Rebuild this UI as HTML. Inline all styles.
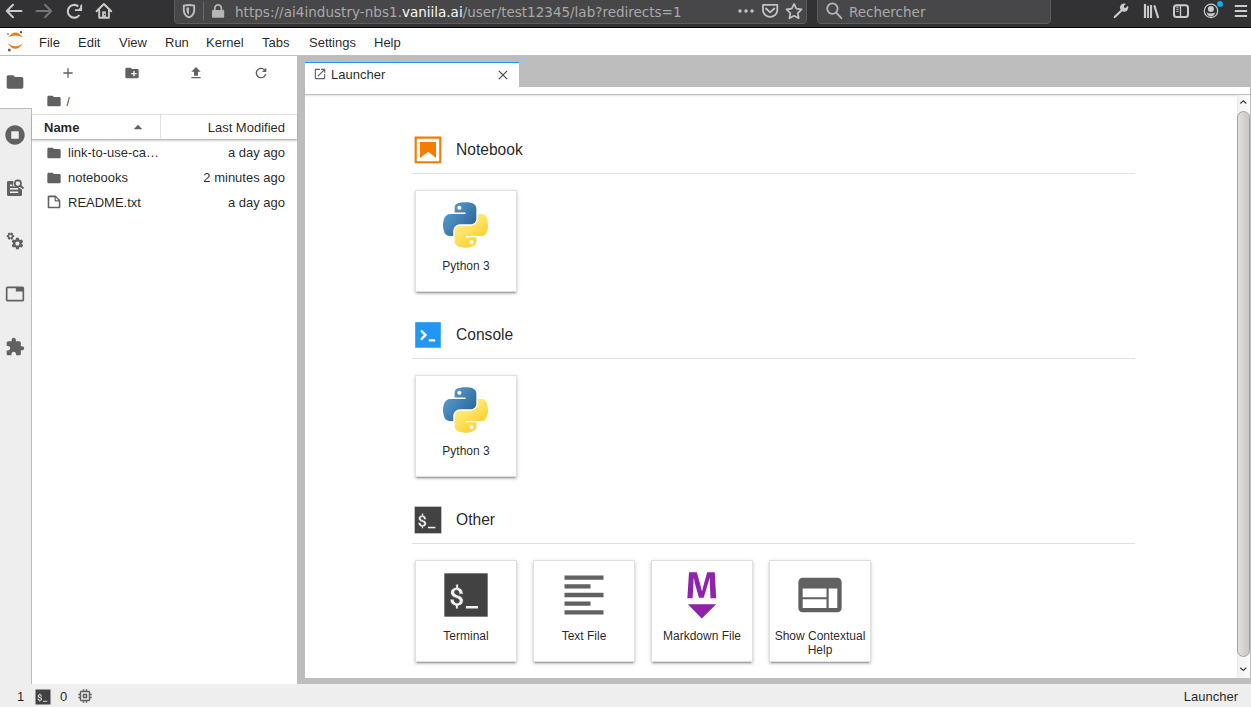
<!DOCTYPE html>
<html lang="en">
<head>
<meta charset="utf-8">
<title>JupyterLab</title>
<style>
*{box-sizing:border-box;margin:0;padding:0}
html,body{width:1251px;height:707px;overflow:hidden;background:#fff}
body{position:relative;font-family:"Liberation Sans",sans-serif;font-size:13px;color:rgba(0,0,0,.87)}
.abs{position:absolute}
svg{display:block;position:absolute;overflow:visible}
/* ---------- Firefox chrome ---------- */
#ff{left:0;top:0;width:1251px;height:28px;background:#323234;border-bottom:1px solid #000}
#url{left:174px;top:-4px;width:633px;height:28px;background:#474749;border:1px solid #5c5c5e;border-radius:4px}
#search{left:817px;top:-4px;width:234px;height:28px;background:#474749;border:1px solid #5c5c5e;border-radius:4px}
.fftext{font-family:"DejaVu Sans","Liberation Sans",sans-serif;font-size:13.5px;white-space:nowrap;line-height:16px}
/* ---------- Jupyter ---------- */
#menubar{left:0;top:28px;width:1251px;height:28px;background:#fff;border-bottom:1px solid #bdbdbd}
.mi{position:absolute;top:35px;line-height:15px;font-size:13px;white-space:nowrap}
#side{left:0;top:56px;width:32px;height:628px;background:#eee;border-right:1px solid #bdbdbd}
#sideact{left:0;top:56px;width:32px;height:53px;background:#fff;border-bottom:1px solid #bdbdbd}
#fb{left:32px;top:56px;width:265px;height:628px;background:#fff}
#split{left:297px;top:56px;width:8px;height:628px;background:#bdbdbd}
#dock{left:305px;top:56px;width:946px;height:628px;background:#bdbdbd}
#tab{left:305px;top:62px;width:214px;height:26px;background:#fff;border-top:1px solid #2196f3}
#tabline{left:305px;top:87px;width:945px;height:8px;background:#fff;border-bottom:1px solid #bdbdbd;box-shadow:0 1px 2px rgba(0,0,0,.12)}
#content{left:305px;top:95px;width:945px;height:583px;background:#fff}
#status{left:0;top:684px;width:1251px;height:23px;background:#eee}
.hdr{position:absolute;font-size:15.6px;line-height:18px;white-space:nowrap}
.sline{position:absolute;left:412px;width:723px;height:1px;background:#e0e0e0}
.card{position:absolute;width:102px;height:102px;background:#fff;border:1px solid #e0e0e0;box-shadow:0 2px 2px 0 rgba(0,0,0,.14),0 1px 5px 0 rgba(0,0,0,.12),0 3px 1px -2px rgba(0,0,0,.2)}
.clabel{position:absolute;left:0;width:100px;text-align:center;font-size:12px;line-height:14px;top:68px}
.row{position:absolute;left:32px;width:265px;height:25px;font-size:13px;line-height:15px}
.row .n{position:absolute;left:36px;top:5px;white-space:nowrap}
.row .m{position:absolute;right:12px;top:5px;white-space:nowrap}
</style>
</head>
<body>
<!-- Firefox toolbar -->
<div id="ff" class="abs"></div>
<div id="url" class="abs"></div>
<div id="search" class="abs"></div>
<div class="abs fftext" style="left:235px;top:4px;color:#a9a9ab"><span style="letter-spacing:.04px">https://ai4industry-nbs1.</span><span style="color:#f9f9fa">vaniila.ai</span>/user/test12345/lab?redirects=1</div>
<div class="abs fftext" style="left:849px;top:4px;color:#a9a9ab">Rechercher</div>

<svg id="fficons" width="1251" height="28" viewBox="0 0 1251 28" style="left:0;top:0" fill="none" stroke="#cbcbcc" stroke-width="2" stroke-linecap="round" stroke-linejoin="round">
<!-- back -->
<path d="M21.5 11H7M13 4.8L6.8 11L13 17.2"/>
<!-- forward -->
<path d="M36.5 11H51M45 4.8L51.2 11L45 17.2" stroke="#757577"/>
<!-- reload -->
<path d="M79.4 15A6.4 6.4 0 1 1 78.3 6.4" stroke-width="2.1" stroke-linecap="butt"/>
<path d="M82.1 3.9V11H74.9V9.2H78.4L80.2 7.4V5.4Z" fill="#cbcbcc" stroke="none"/>
<!-- home -->
<path d="M96.6 11.2L103.9 4L111.2 11.2"/><path d="M99.2 10V17.8H108.9V10" stroke-width="1.9"/>
<rect x="102.1" y="11.3" width="3.8" height="6" fill="#c4c4c5" stroke="none"/><circle cx="104.5" cy="14.4" r=".55" fill="#323234" stroke="none"/>
<!-- shield -->
<path d="M183.8 5.7Q189 4.2 194.2 5.7V10C194.2 13.8 192 16.2 189 17.4C186 16.2 183.8 13.8 183.8 10Z" stroke="#bdbdbe" stroke-width="1.9"/>
<path d="M189 7.2Q187.6 7.3 186.5 7.7V10.2C186.6 12.4 187.6 13.9 189 14.7Z" fill="#bdbdbe" stroke="none"/>
<path d="M203.500 2V20" stroke="#5f6a78" stroke-width="1"/>
<!-- lock -->
<path d="M214.800 10V8.200A3.300 3.300 0 0 1 221.400 8.200V10" stroke="#b5b5b6" stroke-width="1.800"/>
<rect x="212" y="10" width="12.200" height="7.700" rx="1" fill="#b5b5b6" stroke="none"/>
<!-- dots -->
<g fill="#c3c3c4" stroke="none"><circle cx="740" cy="11" r="1.75"/><circle cx="746" cy="11" r="1.75"/><circle cx="752" cy="11" r="1.75"/></g>
<!-- pocket -->
<path d="M763 4.9H777.3V10.2A7.15 6.7 0 0 1 763 10.2Z" stroke="#c3c3c4" stroke-width="1.8"/>
<path d="M766 8.5L770.15 12.4L774.3 8.5" stroke="#c3c3c4" stroke-width="1.8"/>
<!-- star -->
<path d="M794.05 3.95L796.34 8.69L801.56 9.41L797.76 13.06L798.69 18.24L794.05 15.75L789.41 18.24L790.34 13.06L786.54 9.41L791.76 8.69Z" stroke="#c3c3c4" stroke-width="1.7"/>
<!-- search -->
<circle cx="832.4" cy="8.6" r="5.2" stroke="#b5b5b6" stroke-width="1.8"/>
<path d="M836.2 12.6L841.4 18.2" stroke="#b5b5b6" stroke-width="1.9"/>
<!-- wrench -->
<path d="M1114.700 17L1122 10" stroke-width="2.200"/>
<circle cx="1124.100" cy="7.600" r="4.200" fill="#cbcbcc" stroke="none"/>
<path d="M1125.200 6.500L1129.500 2.200" stroke="#323234" stroke-width="2.700" stroke-linecap="round"/>
<!-- library -->
<path d="M1145 4V18" stroke-linecap="butt" stroke-width="2.200"/><path d="M1148.050 5.800V18" stroke-linecap="butt" stroke-width="1.900"/><path d="M1151.050 5V18" stroke-linecap="butt" stroke-width="2.100"/>
<path d="M1154.300 5.400L1158.200 18" stroke-linecap="butt" stroke-width="2.100"/>
<!-- sidebar -->
<rect x="1174" y="5.200" width="14" height="11.800" rx="2.500" stroke-width="2"/>
<path d="M1180.500 5V17.200" stroke-width="1.300" stroke-linecap="butt"/>
<path d="M1176.300 7.200H1178.600M1176.300 9.300H1178.600M1176.300 11.400H1178.600" stroke-width="1" stroke-linecap="butt"/>
<!-- account -->
<circle cx="1211" cy="10.85" r="6.7" stroke-width="1.2"/>
<circle cx="1210.9" cy="8.9" r="3" fill="#cdcdce" stroke="none"/>
<path d="M1206.7 12.5Q1210.9 14.5 1215.1 12.5Q1214 16.4 1210.9 16.4Q1207.8 16.4 1206.7 12.5Z" fill="#cdcdce" stroke="none"/>
<circle cx="1220" cy="3.9" r="2.9" fill="#00b3f4" stroke="none"/>
<!-- hamburger -->
<path d="M1234.8 6H1247.1M1234.8 11H1247.1M1234.8 16H1247.1" stroke-linecap="butt" stroke-width="2.1"/>
</svg>

<!-- Jupyter menubar -->
<div id="menubar" class="abs"></div>
<span class="mi" style="left:39px">File</span>
<span class="mi" style="left:78px">Edit</span>
<span class="mi" style="left:119px">View</span>
<span class="mi" style="left:165px">Run</span>
<span class="mi" style="left:206px">Kernel</span>
<span class="mi" style="left:262px">Tabs</span>
<span class="mi" style="left:309px">Settings</span>
<span class="mi" style="left:374px">Help</span>

<!-- sidebar / file browser -->
<div id="side" class="abs"></div>
<div id="sideact" class="abs"></div>
<div id="fb" class="abs"></div>
<div id="split" class="abs"></div>
<div id="dock" class="abs"></div>
<div id="tab" class="abs"></div>
<div id="content" class="abs"></div>
<div id="tabline" class="abs"></div>
<div id="status" class="abs"></div>

<div class="abs" style="left:66.4px;top:95px;font-size:12px;line-height:14px;color:rgba(0,0,0,.8)">/</div>
<div class="abs" style="left:32px;top:114px;width:265px;height:26px;border-top:1px solid #e0e0e0;border-bottom:1px solid #bdbdbd;box-shadow:0 1px 2px rgba(0,0,0,.2)"></div>
<div class="abs" style="left:160px;top:115px;width:1px;height:24px;background:#e0e0e0"></div>
<div class="abs" style="left:44px;top:120px;font-size:13px;line-height:15px;font-weight:bold">Name</div>
<div class="abs" style="left:160px;top:120px;width:125px;text-align:right;font-size:13px;line-height:15px">Last Modified</div>
<div class="row" style="top:140px"><span class="n">link-to-use-ca…</span><span class="m">a day ago</span></div>
<div class="row" style="top:165px"><span class="n">notebooks</span><span class="m">2 minutes ago</span></div>
<div class="row" style="top:190px"><span class="n">README.txt</span><span class="m">a day ago</span></div>


<!-- ===== Jupyter icons ===== -->
<svg width="32" height="28" viewBox="0 28 32 28" style="left:0;top:28px">
<path d="M7.900 37.600Q15.400 27.200 22.900 37.600Q15.400 33.400 7.900 37.600Z" fill="#f47a08"/>
<path d="M7.700 43.300Q15.400 54.400 23 43.300Q15.400 49.400 7.700 43.300Z" fill="#f47a08"/>
<circle cx="21" cy="32.200" r="1.150" fill="#4e4e4e"/><circle cx="8" cy="33.900" r=".850" fill="#767677"/><circle cx="9.300" cy="50" r="1.500" fill="#616161"/>
</svg>
<!-- sidebar: folder -->
<svg width="20" height="20" viewBox="0 0 24 24" style="left:5px;top:72px"><path fill="#616161" d="M10 4H4c-1.100 0-1.990.900-1.990 2L2 18c0 1.100.900 2 2 2h16c1.100 0 2-.900 2-2V8c0-1.100-.900-2-2-2h-8l-2-2z"/></svg>
<!-- sidebar: running -->
<svg width="20" height="20" viewBox="0 0 512 512" style="left:5px;top:125px"><path fill="#616161" d="M256 8C119 8 8 119 8 256s111 248 248 248 248-111 248-248S393 8 256 8zm96 328c0 8.800-7.200 16-16 16H176c-8.800 0-16-7.200-16-16V176c0-8.800 7.200-16 16-16h160c8.800 0 16 7.200 16 16v160z"/></svg>
<!-- sidebar: palette -->
<svg width="32" height="24" viewBox="0 176 32 24" style="left:0;top:176px">
<rect x="7" y="181" width="15" height="15" rx="1.200" fill="#616161"/>
<rect x="10" y="184.600" width="2.400" height="1.500" fill="#f4f4f4"/>
<rect x="10" y="188.100" width="8.200" height="1.500" fill="#f4f4f4"/>
<rect x="10" y="191.500" width="8.200" height="1.500" fill="#f4f4f4"/>
<path d="M13.300 180H23V187.700H18.600V186.500H13.300Z" fill="#eee"/>
<path d="M19.500 185.300L23.800 189" stroke="#eee" stroke-width="3.600"/>
<circle cx="17.900" cy="183.500" r="3.100" fill="#eee" stroke="#5a5a5a" stroke-width="1.600"/>
<path d="M20.300 185.700L23 188" stroke="#5a5a5a" stroke-width="1.800" stroke-linecap="round"/>
</svg>
<!-- sidebar: build (gears) -->
<svg width="20" height="20" viewBox="0 0 24 24" style="left:5px;top:231px"><g fill="#616161"><path d="M14.900 17.450C16.250 17.450 17.350 16.350 17.350 15C17.350 13.650 16.250 12.550 14.900 12.550C13.540 12.550 12.450 13.650 12.450 15C12.450 16.350 13.540 17.450 14.900 17.450ZM20.100 15.680L21.580 16.840C21.710 16.950 21.750 17.130 21.660 17.290L20.260 19.710C20.170 19.860 20 19.920 19.830 19.860L18.090 19.160C17.730 19.440 17.330 19.670 16.910 19.850L16.640 21.700C16.620 21.870 16.470 22 16.300 22H13.500C13.320 22 13.180 21.870 13.150 21.700L12.890 19.850C12.460 19.670 12.070 19.440 11.710 19.160L9.960 19.860C9.810 19.920 9.620 19.860 9.540 19.710L8.140 17.290C8.050 17.130 8.090 16.950 8.220 16.840L9.700 15.680L9.650 15L9.700 14.310L8.220 13.160C8.090 13.050 8.050 12.860 8.140 12.710L9.540 10.290C9.620 10.130 9.810 10.070 9.960 10.130L11.710 10.840C12.070 10.560 12.460 10.320 12.890 10.150L13.150 8.290C13.180 8.130 13.320 8 13.500 8H16.300C16.470 8 16.620 8.130 16.640 8.290L16.910 10.150C17.330 10.320 17.730 10.560 18.090 10.840L19.830 10.130C20 10.070 20.170 10.130 20.260 10.290L21.660 12.710C21.750 12.860 21.710 13.050 21.580 13.160L20.100 14.310L20.150 15L20.100 15.680Z"/><path d="M7.330 7.444C8.083 7.010 8.339 6.053 7.904 5.300C7.469 4.546 6.508 4.282 5.755 4.717C5.392 4.926 5.127 5.271 5.018 5.676C4.910 6.081 4.967 6.512 5.176 6.875C5.611 7.628 6.576 7.880 7.330 7.444ZM9.657 4.796L10.867 4.952C10.963 4.977 11.040 5.071 11.038 5.188L11.039 6.989C11.046 7.101 10.962 7.195 10.855 7.211L9.660 7.381L9.239 8.132L9.670 9.257C9.707 9.363 9.669 9.477 9.574 9.532L8.015 10.432C7.911 10.492 7.793 10.468 7.721 10.382L6.987 9.432L6.109 9.431L5.347 10.390C5.282 10.470 5.165 10.490 5.078 10.444L3.512 9.539C3.411 9.486 3.382 9.364 3.417 9.263L3.858 8.151L3.422 7.392L2.217 7.227C2.115 7.207 2.043 7.118 2.045 7.001L2.044 5.200C2.037 5.088 2.121 4.994 2.228 4.978L3.423 4.808L3.864 4.057L3.423 2.940C3.386 2.835 3.424 2.721 3.519 2.666L5.078 1.766C5.182 1.706 5.300 1.730 5.372 1.815L6.111 2.757L6.979 2.758L7.741 1.798C7.806 1.719 7.923 1.698 8.010 1.745L9.576 2.650C9.677 2.703 9.706 2.825 9.671 2.926L9.225 4.047L9.657 4.796Z"/></g></svg>
<!-- sidebar: tabs -->
<svg width="20" height="20" viewBox="0 0 24 24" style="left:5px;top:284px"><path fill="#616161" d="M21 3H3c-1.100 0-2 .900-2 2v14c0 1.100.900 2 2 2h18c1.100 0 2-.900 2-2V5c0-1.100-.900-2-2-2zm0 16H3V5h10v4h8v10z"/></svg>
<!-- sidebar: extension -->
<svg width="20" height="20" viewBox="0 0 24 24" style="left:5px;top:337px"><path fill="#616161" d="M20.500 11H19V7c0-1.100-.900-2-2-2h-4V3.500C13 2.120 11.880 1 10.500 1S8 2.120 8 3.500V5H4c-1.100 0-1.990.900-1.990 2v3.800H3.500c1.490 0 2.700 1.210 2.700 2.700s-1.210 2.700-2.700 2.700H2V20c0 1.100.900 2 2 2h3.800v-1.500c0-1.490 1.210-2.700 2.700-2.700 1.490 0 2.700 1.210 2.700 2.700V22H17c1.100 0 2-.900 2-2v-4h1.500c1.380 0 2.500-1.120 2.500-2.500S21.880 11 20.500 11z"/></svg>
<!-- fb toolbar -->
<svg width="16" height="16" viewBox="0 0 24 24" style="left:60px;top:65px"><path fill="#616161" d="M19 13h-6v6h-2v-6H5v-2h6V5h2v6h6v2z"/></svg>
<svg width="16" height="16" viewBox="0 0 24 24" style="left:124px;top:65px"><path fill="#616161" d="M20 6h-8l-2-2H4c-1.110 0-1.990.890-1.990 2L2 18c0 1.110.890 2 2 2h16c1.110 0 2-.890 2-2V8c0-1.110-.890-2-2-2zm-1 8h-3v3h-2v-3h-3v-2h3V9h2v3h3v2z"/></svg>
<svg width="16" height="16" viewBox="0 0 24 24" style="left:188px;top:65px"><path fill="#616161" d="M9 16h6v-6h4l-7-7-7 7h4zm-4 2h14v2H5z"/></svg>
<svg width="16" height="16" viewBox="0 0 18 18" style="left:252.500px;top:65px"><path fill="#616161" d="M9 13.500c-2.490 0-4.500-2.010-4.500-4.500S6.510 4.500 9 4.500c1.240 0 2.360.520 3.170 1.330L10 8h5V3l-1.760 1.760C12.150 3.680 10.660 3 9 3 5.690 3 3.010 5.690 3.010 9S5.690 15 9 15c2.970 0 5.430-2.160 5.900-5h-1.520c-.460 2-2.240 3.500-4.380 3.500z"/></svg>
<!-- breadcrumb folder -->
<svg width="16" height="16" viewBox="0 0 24 24" style="left:46px;top:93px"><path fill="#616161" d="M10 4H4c-1.100 0-1.990.900-1.990 2L2 18c0 1.100.900 2 2 2h16c1.100 0 2-.900 2-2V8c0-1.100-.900-2-2-2h-8l-2-2z"/></svg>
<!-- sort caret -->
<svg width="10" height="6" viewBox="0 0 10 6" style="left:133px;top:124px"><path fill="#616161" d="M.700 5.300L5 .800L9.300 5.300Z"/></svg>
<!-- file list icons -->
<svg width="16" height="16" viewBox="0 0 24 24" style="left:46px;top:145px"><path fill="#616161" d="M10 4H4c-1.100 0-1.990.900-1.990 2L2 18c0 1.100.900 2 2 2h16c1.100 0 2-.900 2-2V8c0-1.100-.900-2-2-2h-8l-2-2z"/></svg>
<svg width="16" height="16" viewBox="0 0 24 24" style="left:46px;top:170px"><path fill="#616161" d="M10 4H4c-1.100 0-1.990.900-1.990 2L2 18c0 1.100.900 2 2 2h16c1.100 0 2-.900 2-2V8c0-1.100-.900-2-2-2h-8l-2-2z"/></svg>
<svg width="16" height="16" viewBox="0 0 22 22" style="left:46px;top:194px"><path fill="#616161" d="M19.300 8.200l-5.500-5.500c-.300-.300-.700-.500-1.200-.500H3.900c-.800.100-1.600.900-1.600 1.800v14.100c0 .900.700 1.600 1.600 1.600h14.200c.900 0 1.600-.700 1.600-1.600V9.400c.100-.500-.100-.900-.400-1.200zm-5.800-3.300l3.400 3.600h-3.400V4.900zm3.900 12.700H4.700c-.100 0-.200 0-.200-.200V4.700c0-.200.100-.300.200-.300h7.200v4.400s0 .800.300 1.100c.300.300 1.100.300 1.100.300h4.300v7.200s-.100.200-.200.200z"/></svg>
<!-- tab icons -->
<svg width="14" height="14" viewBox="0 0 24 24" style="left:313px;top:67px"><path fill="#616161" d="M19 19H5V5h7V3H5c-1.110 0-2 .900-2 2v14c0 1.100.890 2 2 2h14c1.100 0 2-.900 2-2v-7h-2v7zM14 3v2h3.590l-9.830 9.830 1.410 1.410L19 6.410V10h2V3h-7z"/></svg>
<svg width="12" height="12" viewBox="0 0 12 12" style="left:497px;top:69px"><path d="M1.800 1.800L10.200 10.200M10.200 1.800L1.800 10.200" stroke="#424242" stroke-width="1.150" fill="none"/></svg>

<!-- tab -->
<div class="abs" style="left:331px;top:67px;font-size:13px;line-height:15px">Launcher</div>

<!-- launcher -->
<div class="hdr" style="left:456px;top:141px">Notebook</div>
<div class="sline" style="top:173px"></div>
<div class="card" style="left:415px;top:190px"><div class="clabel">Python 3</div></div>

<div class="hdr" style="left:456px;top:326px">Console</div>
<div class="sline" style="top:358px"></div>
<div class="card" style="left:415px;top:375px"><div class="clabel">Python 3</div></div>

<div class="hdr" style="left:456px;top:511px">Other</div>
<div class="sline" style="top:543px"></div>
<div class="card" style="left:415px;top:560px"><div class="clabel">Terminal</div></div>
<div class="card" style="left:533px;top:560px"><div class="clabel">Text File</div></div>
<div class="card" style="left:651px;top:560px"><div class="clabel">Markdown File</div></div>
<div class="card" style="left:769px;top:560px"><div class="clabel">Show Contextual Help</div></div>


<svg width="0" height="0" style="left:0;top:0"><defs>
<linearGradient id="pyb" gradientUnits="userSpaceOnUse" x1="10" y1="8" x2="70" y2="60"><stop offset="0" stop-color="#5a9fd4"/><stop offset="1" stop-color="#306998"/></linearGradient>
<linearGradient id="pyy" gradientUnits="userSpaceOnUse" x1="75" y1="95" x2="50" y2="62"><stop offset="0" stop-color="#ffd43b"/><stop offset="1" stop-color="#ffe873"/></linearGradient>
</defs></svg>
<!-- section icons -->
<svg width="32" height="32" viewBox="0 0 22 22" style="left:412px;top:134px"><g fill="#f57c00"><path d="M18.700 3.300v15.400H3.300V3.300h15.400m1.500-1.500H1.800v18.300h18.300l.1-18.300z"/><path d="M16.500 16.500l-5.400-4.300-5.600 4.300v-11h11z"/></g></svg>
<svg width="32" height="32" viewBox="0 0 200 200" style="left:412px;top:319px"><path fill="#2196f3" d="M20 19.800h160v159.900H20z"/><path fill="#fff" d="M105 127.300h40v12.800h-40zM51.100 77L74 99.900l-23.300 23.300 10.500 10.500 23.300-23.300L95 99.900 84.500 89.400 61.600 66.500z"/></svg>
<svg width="32" height="32" viewBox="0 0 24 24" style="left:412px;top:504px"><rect x="2" y="2" width="20" height="20" fill="#424242"/><g transform="translate(-0.161,-0.407) scale(1.361,1.269)"><path fill="#f2f2f2" stroke="#424242" stroke-width=".3" d="M5.057 8.762C5.057 8.553 5.107 8.383 5.209 8.252C5.314 8.121 5.480 8.056 5.707 8.056C6.016 8.056 6.238 8.177 6.375 8.419C6.516 8.661 6.596 9.027 6.615 9.518H8.004C7.984 8.865 7.844 8.326 7.582 7.900C7.320 7.471 6.928 7.186 6.404 7.045V5.813H5.449V7.006C4.918 7.100 4.492 7.307 4.172 7.627C3.852 7.943 3.691 8.324 3.691 8.770C3.691 9.199 3.773 9.547 3.938 9.813C4.105 10.078 4.330 10.297 4.611 10.469C4.893 10.637 5.225 10.787 5.607 10.920C5.994 11.053 6.264 11.188 6.416 11.324C6.572 11.461 6.650 11.664 6.650 11.934C6.650 12.168 6.590 12.352 6.469 12.484C6.348 12.617 6.172 12.684 5.941 12.684C5.613 12.684 5.354 12.568 5.162 12.338C4.975 12.107 4.881 11.750 4.881 11.266H3.498C3.498 11.949 3.660 12.502 3.984 12.924C4.309 13.342 4.766 13.617 5.355 13.750V14.869H6.305V13.762C6.852 13.676 7.273 13.475 7.570 13.158C7.867 12.838 8.016 12.428 8.016 11.928C8.016 11.498 7.934 11.150 7.770 10.885C7.605 10.615 7.381 10.395 7.096 10.223C6.814 10.047 6.477 9.889 6.082 9.748C5.691 9.607 5.424 9.465 5.279 9.320C5.131 9.172 5.057 8.986 5.057 8.762Z"/></g><rect x="11.950" y="17.080" width="5.600" height="1.150" fill="#f2f2f2"/></svg>
<!-- card icons -->
<svg width="45" height="46" viewBox="0 0 111 112" style="left:443px;top:202px"><path fill="url(#pyb)" d="M54.919 0.001C50.335 0.022 45.958 0.413 42.106 1.095C30.760 3.099 28.700 7.295 28.700 15.032L28.700 25.251L55.513 25.251L55.513 28.657L28.700 28.657L18.638 28.657C10.845 28.657 4.022 33.341 1.888 42.251C-0.574 52.464 -0.684 58.837 1.888 69.501C3.793 77.439 8.345 83.095 16.138 83.095L25.356 83.095L25.356 70.845C25.356 61.995 33.013 54.188 42.106 54.188L68.888 54.188C76.342 54.188 82.294 48.050 82.294 40.563L82.294 15.032C82.294 7.766 76.164 2.307 68.888 1.095C64.282 0.328 59.502 -0.020 54.919 0.001ZM40.419 8.220C43.188 8.220 45.450 10.518 45.450 13.345C45.450 16.161 43.188 18.438 40.419 18.438C37.639 18.438 35.388 16.161 35.388 13.345C35.388 10.518 37.639 8.220 40.419 8.220Z"/><path fill="url(#pyy)" d="M85.638 28.657L85.638 40.563C85.638 49.794 77.812 57.563 68.888 57.563L42.106 57.563C34.770 57.563 28.700 63.842 28.700 71.188L28.700 96.720C28.700 103.986 35.019 108.260 42.106 110.345C50.594 112.840 58.733 113.291 68.888 110.345C75.638 108.390 82.294 104.457 82.294 96.720L82.294 86.501L55.513 86.501L55.513 83.095L82.294 83.095L95.700 83.095C103.492 83.095 106.396 77.659 109.106 69.501C111.906 61.102 111.787 53.025 109.106 42.251C107.180 34.493 103.502 28.657 95.700 28.657L85.638 28.657ZM70.575 93.313C73.355 93.313 75.606 95.591 75.606 98.407C75.606 101.234 73.355 103.532 70.575 103.532C67.806 103.532 65.544 101.234 65.544 98.407C65.544 95.591 67.806 93.313 70.575 93.313Z"/></svg>
<svg width="45" height="46" viewBox="0 0 111 112" style="left:443px;top:387px"><path fill="url(#pyb)" d="M54.919 0.001C50.335 0.022 45.958 0.413 42.106 1.095C30.760 3.099 28.700 7.295 28.700 15.032L28.700 25.251L55.513 25.251L55.513 28.657L28.700 28.657L18.638 28.657C10.845 28.657 4.022 33.341 1.888 42.251C-0.574 52.464 -0.684 58.837 1.888 69.501C3.793 77.439 8.345 83.095 16.138 83.095L25.356 83.095L25.356 70.845C25.356 61.995 33.013 54.188 42.106 54.188L68.888 54.188C76.342 54.188 82.294 48.050 82.294 40.563L82.294 15.032C82.294 7.766 76.164 2.307 68.888 1.095C64.282 0.328 59.502 -0.020 54.919 0.001ZM40.419 8.220C43.188 8.220 45.450 10.518 45.450 13.345C45.450 16.161 43.188 18.438 40.419 18.438C37.639 18.438 35.388 16.161 35.388 13.345C35.388 10.518 37.639 8.220 40.419 8.220Z"/><path fill="url(#pyy)" d="M85.638 28.657L85.638 40.563C85.638 49.794 77.812 57.563 68.888 57.563L42.106 57.563C34.770 57.563 28.700 63.842 28.700 71.188L28.700 96.720C28.700 103.986 35.019 108.260 42.106 110.345C50.594 112.840 58.733 113.291 68.888 110.345C75.638 108.390 82.294 104.457 82.294 96.720L82.294 86.501L55.513 86.501L55.513 83.095L82.294 83.095L95.700 83.095C103.492 83.095 106.396 77.659 109.106 69.501C111.906 61.102 111.787 53.025 109.106 42.251C107.180 34.493 103.502 28.657 95.700 28.657L85.638 28.657ZM70.575 93.313C73.355 93.313 75.606 95.591 75.606 98.407C75.606 101.234 73.355 103.532 70.575 103.532C67.806 103.532 65.544 101.234 65.544 98.407C65.544 95.591 67.806 93.313 70.575 93.313Z"/></svg>
<svg width="52" height="52" viewBox="0 0 24 24" style="left:440px;top:569px"><rect x="2" y="2" width="20" height="20" fill="#424242"/><g transform="translate(-0.161,-0.407) scale(1.361,1.269)"><path fill="#f2f2f2" stroke="#424242" stroke-width=".3" d="M5.057 8.762C5.057 8.553 5.107 8.383 5.209 8.252C5.314 8.121 5.480 8.056 5.707 8.056C6.016 8.056 6.238 8.177 6.375 8.419C6.516 8.661 6.596 9.027 6.615 9.518H8.004C7.984 8.865 7.844 8.326 7.582 7.900C7.320 7.471 6.928 7.186 6.404 7.045V5.813H5.449V7.006C4.918 7.100 4.492 7.307 4.172 7.627C3.852 7.943 3.691 8.324 3.691 8.770C3.691 9.199 3.773 9.547 3.938 9.813C4.105 10.078 4.330 10.297 4.611 10.469C4.893 10.637 5.225 10.787 5.607 10.920C5.994 11.053 6.264 11.188 6.416 11.324C6.572 11.461 6.650 11.664 6.650 11.934C6.650 12.168 6.590 12.352 6.469 12.484C6.348 12.617 6.172 12.684 5.941 12.684C5.613 12.684 5.354 12.568 5.162 12.338C4.975 12.107 4.881 11.750 4.881 11.266H3.498C3.498 11.949 3.660 12.502 3.984 12.924C4.309 13.342 4.766 13.617 5.355 13.750V14.869H6.305V13.762C6.852 13.676 7.273 13.475 7.570 13.158C7.867 12.838 8.016 12.428 8.016 11.928C8.016 11.498 7.934 11.150 7.770 10.885C7.605 10.615 7.381 10.395 7.096 10.223C6.814 10.047 6.477 9.889 6.082 9.748C5.691 9.607 5.424 9.465 5.279 9.320C5.131 9.172 5.057 8.986 5.057 8.762Z"/></g><rect x="11.950" y="17.080" width="5.600" height="1.150" fill="#f2f2f2"/></svg>
<svg width="52" height="52" viewBox="0 0 24 24" style="left:558px;top:569px"><path fill="#616161" d="M15 15H3v2h12v-2zm0-8H3v2h12V7zM3 13h18v-2H3v2zm0 8h18v-2H3v2zM3 3v2h18V3H3z"/></svg>
<svg width="52" height="52" viewBox="0 0 22 22" style="left:676px;top:569px"><path fill="#8e24aa" d="M5 14.900h12l-6.100 6zm9.400-6.800c0-1.300-.100-2.900-.100-4.500-.400 1.400-.900 2.900-1.300 4.300l-1.300 4.300h-2L8.500 7.900c-.400-1.300-.700-2.900-1-4.300-.100 1.600-.100 3.200-.200 4.600L7 12.400H4.800l.7-11h3.300L10 5.600c.300 1.200.700 2.600 1 3.900.300-1.200.700-2.700 1-3.900l1.200-4.200h3.200l.600 11h-2.400l-.2-4.300z"/></svg>
<svg width="52" height="52" viewBox="0 0 24 24" style="left:794px;top:569px"><path fill="#616161" d="M20 4H4c-1.100 0-1.990.900-1.990 2L2 18c0 1.100.900 2 2 2h16c1.100 0 2-.900 2-2V6c0-1.100-.900-2-2-2zm-5 14H4v-4h11v4zm0-5H4V9h11v4zm5 5h-4V9h4v9z"/></svg>
<!-- scrollbar -->
<div class="abs" style="left:1237px;top:95px;width:13px;height:583px;background:linear-gradient(90deg,#e9e9e9 0,#f3f3f3 2px,#fafafa 100%)"></div>
<div class="abs" style="left:1237px;top:111px;width:13px;height:546px;border-radius:6.500px;border:1px solid #a4a09b;background:linear-gradient(90deg,#e6e4e1 0,#dddbd8 14%,#cbc7c3 100%)"></div>
<svg width="13" height="10" viewBox="0 0 13 10" style="left:1237px;top:97px"><path d="M3.300 6.500L6.300 3.700L9.300 6.500" fill="none" stroke="#404040" stroke-width="1.200"/></svg>
<svg width="13" height="10" viewBox="0 0 13 10" style="left:1237px;top:664px"><path d="M3.300 3.700L6.300 6.500L9.300 3.700" fill="none" stroke="#404040" stroke-width="1.200"/></svg>

<!-- status bar -->
<svg width="18" height="18" viewBox="0 0 24 24" style="left:34px;top:688px"><rect x="2" y="2" width="20" height="20" fill="#424242"/><g transform="translate(-0.161,-0.407) scale(1.361,1.269)"><path fill="#f2f2f2" stroke="#424242" stroke-width=".3" d="M5.057 8.762C5.057 8.553 5.107 8.383 5.209 8.252C5.314 8.121 5.480 8.056 5.707 8.056C6.016 8.056 6.238 8.177 6.375 8.419C6.516 8.661 6.596 9.027 6.615 9.518H8.004C7.984 8.865 7.844 8.326 7.582 7.900C7.320 7.471 6.928 7.186 6.404 7.045V5.813H5.449V7.006C4.918 7.100 4.492 7.307 4.172 7.627C3.852 7.943 3.691 8.324 3.691 8.770C3.691 9.199 3.773 9.547 3.938 9.813C4.105 10.078 4.330 10.297 4.611 10.469C4.893 10.637 5.225 10.787 5.607 10.920C5.994 11.053 6.264 11.188 6.416 11.324C6.572 11.461 6.650 11.664 6.650 11.934C6.650 12.168 6.590 12.352 6.469 12.484C6.348 12.617 6.172 12.684 5.941 12.684C5.613 12.684 5.354 12.568 5.162 12.338C4.975 12.107 4.881 11.750 4.881 11.266H3.498C3.498 11.949 3.660 12.502 3.984 12.924C4.309 13.342 4.766 13.617 5.355 13.750V14.869H6.305V13.762C6.852 13.676 7.273 13.475 7.570 13.158C7.867 12.838 8.016 12.428 8.016 11.928C8.016 11.498 7.934 11.150 7.770 10.885C7.605 10.615 7.381 10.395 7.096 10.223C6.814 10.047 6.477 9.889 6.082 9.748C5.691 9.607 5.424 9.465 5.279 9.320C5.131 9.172 5.057 8.986 5.057 8.762Z"/></g><rect x="11.950" y="17.080" width="5.600" height="1.150" fill="#f2f2f2"/></svg>
<svg width="18" height="18" viewBox="0 0 24 24" style="left:76px;top:687px"><path fill="#616161" d="M15 9H9v6h6V9zm-2 4h-2v-2h2v2zm8-2V9h-2V7c0-1.100-.900-2-2-2h-2V3h-2v2h-2V3H9v2H7c-1.100 0-2 .900-2 2v2H3v2h2v2H3v2h2v2c0 1.100.900 2 2 2h2v2h2v-2h2v2h2v-2h2c1.100 0 2-.900 2-2v-2h2v-2h-2v-2h2zm-4 6H7V7h10v10z"/></svg>

<div class="abs" style="left:17px;top:689px;font-size:13px;line-height:15px">1</div>
<div class="abs" style="left:60px;top:689px;font-size:13px;line-height:15px">0</div>
<div class="abs" style="left:1100px;top:689px;width:138px;text-align:right;font-size:13px;line-height:15px">Launcher</div>
</body>
</html>
